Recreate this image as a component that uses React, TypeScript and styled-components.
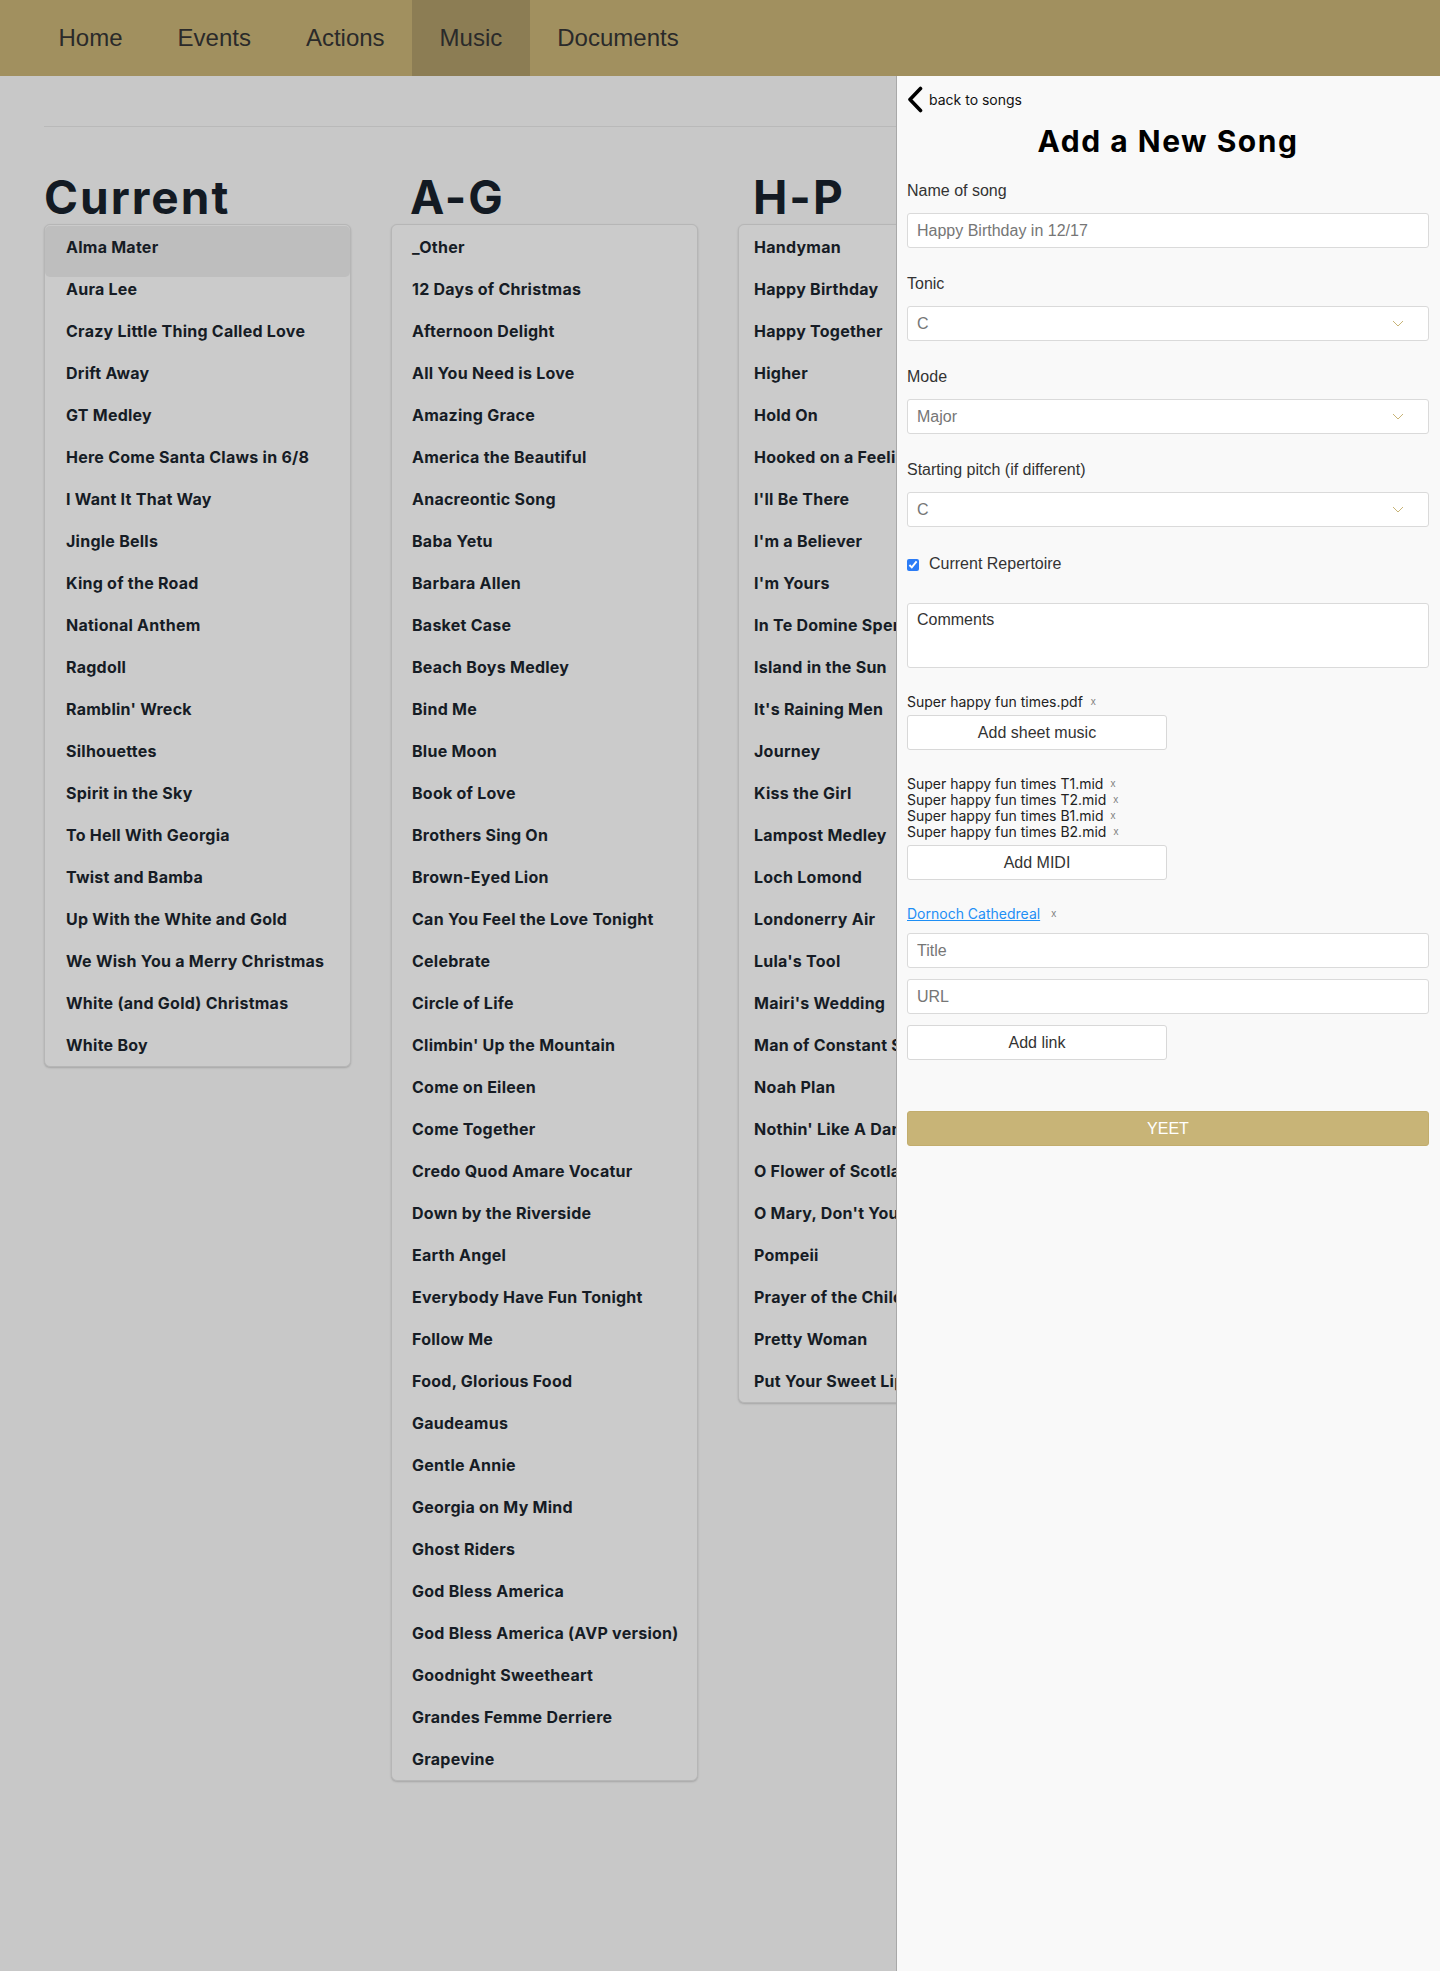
import React from "react";
import styled, { createGlobalStyle } from "styled-components";

const GlobalStyle = createGlobalStyle`
  html, body { margin: 0; padding: 0; }
  body {
    background: #c8c8c8;
    font-family: "Liberation Sans", Arial, sans-serif;
  }
  * { box-sizing: border-box; }
`;

const Root = styled.div`
  position: relative;
  min-height: 100vh;
  background: #c8c8c8;
`;

const NavBar = styled.nav`
  display: flex;
  align-items: stretch;
  height: 76px;
  padding-left: 31px;
  background: #a1905f;
`;

const NavItem = styled.a<{ $active?: boolean }>`
  display: flex;
  align-items: center;
  padding: 0 27.5px;
  font-family: "Liberation Sans", Arial, sans-serif;
  font-size: 24px;
  color: #2a2a2a;
  text-decoration: none;
  background: ${(p) => (p.$active ? "#8c7d54" : "transparent")};
`;

const Main = styled.main`
  padding: 50px 48px 60px 44px;
`;

const Rule = styled.hr`
  margin: 0;
  border: 0;
  height: 1px;
  background: #b9b9b9;
`;

const Columns = styled.div`
  display: grid;
  grid-template-columns: repeat(4, 307px);
  column-gap: 40px;
  align-items: start;
  margin-top: 47px;
`;

const Column = styled.section`
  display: flex;
  flex-direction: column;
`;

const Heading = styled.h2<{ $indent: number }>`
  margin: 0 0 4px;
  padding-left: ${(p) => p.$indent}px;
  font-family: Inter, "Noto Sans", sans-serif;
  font-weight: 700;
  font-size: 46px;
  line-height: 46px;
  letter-spacing: 2px;
  color: #131a23;
`;

const Card = styled.ul`
  list-style: none;
  margin: 0;
  padding: 1px 0 0;
  background: #cbcbcb;
  border: 1px solid #b6b6b6;
  border-radius: 6px;
  box-shadow: 0 1px 2px rgba(0, 0, 0, 0.18);
`;

const Item = styled.li<{ $indent: number; $selected?: boolean }>`
  height: ${(p) => (p.$selected ? 51 : 42)}px;
  margin-bottom: ${(p) => (p.$selected ? -9 : 0)}px;
  padding-left: ${(p) => p.$indent}px;
  font-family: Inter, "Noto Sans", sans-serif;
  font-weight: 700;
  font-size: 16px;
  line-height: 42px;
  letter-spacing: 0.25px;
  color: #161c25;
  white-space: nowrap;
  border-radius: 5px;
  background: ${(p) => (p.$selected ? "#bebebe" : "transparent")};
`;

const Panel = styled.aside`
  position: absolute;
  top: 76px;
  right: 0;
  bottom: 0;
  width: 544px;
  background: #f9f9f9;
  border-left: 1px solid #a9a9a9;
  padding: 10px 11px 0 10px;
  display: flex;
  flex-direction: column;
`;

const BackLink = styled.a`
  display: flex;
  align-items: center;
  gap: 6px;
  height: 27px;
  font-family: Inter, "Noto Sans", sans-serif;
  font-size: 14px;
  color: #111;
  text-decoration: none;
`;

const Title = styled.h1`
  margin: 10px 0 23px;
  text-align: center;
  font-family: Inter, "Noto Sans", sans-serif;
  font-weight: 700;
  font-size: 30px;
  line-height: 36px;
  letter-spacing: 1.5px;
  color: #000;
`;

const Field = styled.div`
  display: flex;
  flex-direction: column;
  margin-bottom: 27px;
`;

const Label = styled.label`
  font-size: 16px;
  line-height: 18px;
  color: #333;
  margin-bottom: 13px;
`;

const TextInput = styled.input<{ $gap?: number }>`
  height: 35px;
  width: 100%;
  margin: 0 0 ${(p) => p.$gap ?? 0}px;
  padding: 0 9px;
  border: 1px solid #dadada;
  border-radius: 3px;
  background: #fff;
  font-family: "Liberation Sans", Arial, sans-serif;
  font-size: 16px;
  color: #333;
  &::placeholder { color: #767676; }
`;

const SelectBox = styled.div`
  display: flex;
  align-items: center;
  justify-content: space-between;
  height: 35px;
  padding: 0 24px 0 9px;
  border: 1px solid #dadada;
  border-radius: 3px;
  background: #fff;
  font-size: 16px;
  color: #767676;
`;

const CheckRow = styled.label`
  display: flex;
  align-items: center;
  gap: 10px;
  height: 18px;
  margin: 1px 0 30px;
  font-size: 16px;
  color: #333;
  input {
    width: 12px;
    height: 12px;
    margin: 2px 0 0;
    accent-color: #2b7cf6;
  }
`;

const TextArea = styled.textarea`
  height: 65px;
  padding: 7px 9px;
  margin: 0 0 26px;
  resize: none;
  border: 1px solid #dadada;
  border-radius: 3px;
  background: #fff;
  font-family: "Liberation Sans", Arial, sans-serif;
  font-size: 16px;
  color: #333;
  &::placeholder { color: #333; }
`;

const FileList = styled.div`
  display: flex;
  flex-direction: column;
  margin-bottom: 5px;
`;

const FileRow = styled.div`
  display: flex;
  align-items: center;
  height: 16px;
  font-family: Inter, "Noto Sans", sans-serif;
  font-size: 14px;
  line-height: 16px;
  color: #222;
`;

const Remove = styled.span<{ $gap?: number }>`
  margin-left: ${(p) => p.$gap ?? 7}px;
  font-family: "Liberation Sans", Arial, sans-serif;
  font-size: 10px;
  line-height: 10px;
  color: #808080;
`;

const LinkText = styled.a`
  color: #1e8ff5;
  text-decoration: underline;
`;

const OutlineButton = styled.button<{ $gap?: number }>`
  width: 260px;
  height: 35px;
  margin: 0 0 ${(p) => p.$gap ?? 26}px;
  border: 1px solid #d8d8d8;
  border-radius: 3px;
  background: #fff;
  font-family: "Liberation Sans", Arial, sans-serif;
  font-size: 16px;
  color: #333;
`;

const LinkRow = styled.div`
  margin-bottom: 11px;
`;

const SubmitButton = styled.button`
  width: 100%;
  height: 35px;
  margin-top: 51px;
  border: 1px solid #c2ad6d;
  border-radius: 3px;
  background: #c8b477;
  font-family: "Liberation Sans", Arial, sans-serif;
  font-size: 16px;
  color: #fff;
`;

const Chevron = () => (
  <svg width="12" height="7" viewBox="0 0 12 7" aria-hidden>
    <polyline points="1,1 6,6 11,1" fill="none" stroke="#c8b477" strokeWidth="1" />
  </svg>
);

const BackChevron = () => (
  <svg width="16" height="27" viewBox="0 0 16 27" aria-hidden>
    <polyline
      points="13.5,2.5 3,13.5 13.5,24.5"
      fill="none"
      stroke="#000"
      strokeWidth="3.6"
      strokeLinecap="round"
      strokeLinejoin="round"
    />
  </svg>
);

const current = [
  "Alma Mater", "Aura Lee", "Crazy Little Thing Called Love", "Drift Away", "GT Medley",
  "Here Come Santa Claws in 6/8", "I Want It That Way", "Jingle Bells", "King of the Road",
  "National Anthem", "Ragdoll", "Ramblin' Wreck", "Silhouettes", "Spirit in the Sky",
  "To Hell With Georgia", "Twist and Bamba", "Up With the White and Gold",
  "We Wish You a Merry Christmas", "White (and Gold) Christmas", "White Boy",
];

const aToG = [
  "_Other", "12 Days of Christmas", "Afternoon Delight", "All You Need is Love", "Amazing Grace",
  "America the Beautiful", "Anacreontic Song", "Baba Yetu", "Barbara Allen", "Basket Case",
  "Beach Boys Medley", "Bind Me", "Blue Moon", "Book of Love", "Brothers Sing On",
  "Brown-Eyed Lion", "Can You Feel the Love Tonight", "Celebrate", "Circle of Life",
  "Climbin' Up the Mountain", "Come on Eileen", "Come Together", "Credo Quod Amare Vocatur",
  "Down by the Riverside", "Earth Angel", "Everybody Have Fun Tonight", "Follow Me",
  "Food, Glorious Food", "Gaudeamus", "Gentle Annie", "Georgia on My Mind", "Ghost Riders",
  "God Bless America", "God Bless America (AVP version)", "Goodnight Sweetheart",
  "Grandes Femme Derriere", "Grapevine",
];

const hToP = [
  "Handyman", "Happy Birthday", "Happy Together", "Higher", "Hold On", "Hooked on a Feeling",
  "I'll Be There", "I'm a Believer", "I'm Yours", "In Te Domine Speravi", "Island in the Sun",
  "It's Raining Men", "Journey", "Kiss the Girl", "Lampost Medley", "Loch Lomond",
  "Londonerry Air", "Lula's Tool", "Mairi's Wedding", "Man of Constant Sorrow", "Noah Plan",
  "Nothin' Like A Dame", "O Flower of Scotland", "O Mary, Don't You Weep", "Pompeii",
  "Prayer of the Children", "Pretty Woman", "Put Your Sweet Lips",
];

const qToZ = [
  "Ragdoll", "Ramblin' Wreck", "Shenandoah", "Silhouettes", "Spirit in the Sky", "Stand By Me",
  "Sweet Caroline", "The Longest Time", "To Hell With Georgia", "Twist and Bamba",
  "Up With the White and Gold", "We Wish You a Merry Christmas", "White (and Gold) Christmas",
  "White Boy",
];

const columns = [
  { title: "Current", songs: current, headIndent: 0, itemIndent: 21, selected: 0 },
  { title: "A-G", songs: aToG, headIndent: 19, itemIndent: 20, selected: -1 },
  { title: "H-P", songs: hToP, headIndent: 15, itemIndent: 15, selected: -1 },
  { title: "Q-Z", songs: qToZ, headIndent: 15, itemIndent: 15, selected: -1 },
];

const midis = [
  "Super happy fun times T1.mid",
  "Super happy fun times T2.mid",
  "Super happy fun times B1.mid",
  "Super happy fun times B2.mid",
];

export default function App() {
  return (
    <Root>
      <GlobalStyle />
      <NavBar>
        <NavItem href="#">Home</NavItem>
        <NavItem href="#">Events</NavItem>
        <NavItem href="#">Actions</NavItem>
        <NavItem href="#" $active>Music</NavItem>
        <NavItem href="#">Documents</NavItem>
      </NavBar>
      <Main>
        <Rule />
        <Columns>
          {columns.map((c) => (
            <Column key={c.title}>
              <Heading $indent={c.headIndent}>{c.title}</Heading>
              <Card>
                {c.songs.map((s, i) => (
                  <Item key={s + i} $indent={c.itemIndent} $selected={i === c.selected}>
                    {s}
                  </Item>
                ))}
              </Card>
            </Column>
          ))}
        </Columns>
      </Main>
      <Panel>
        <BackLink href="#">
          <BackChevron />
          back to songs
        </BackLink>
        <Title>Add a New Song</Title>
        <Field>
          <Label>Name of song</Label>
          <TextInput placeholder="Happy Birthday in 12/17" />
        </Field>
        <Field>
          <Label>Tonic</Label>
          <SelectBox>
            C
            <Chevron />
          </SelectBox>
        </Field>
        <Field>
          <Label>Mode</Label>
          <SelectBox>
            Major
            <Chevron />
          </SelectBox>
        </Field>
        <Field>
          <Label>Starting pitch (if different)</Label>
          <SelectBox>
            C
            <Chevron />
          </SelectBox>
        </Field>
        <CheckRow>
          <input type="checkbox" defaultChecked />
          Current Repertoire
        </CheckRow>
        <TextArea placeholder="Comments" />
        <FileList>
          <FileRow>
            Super happy fun times.pdf<Remove $gap={8}>x</Remove>
          </FileRow>
        </FileList>
        <OutlineButton>Add sheet music</OutlineButton>
        <FileList>
          {midis.map((m) => (
            <FileRow key={m}>
              {m}
              <Remove>x</Remove>
            </FileRow>
          ))}
        </FileList>
        <OutlineButton>Add MIDI</OutlineButton>
        <LinkRow>
          <FileRow>
            <LinkText href="#">Dornoch Cathedreal</LinkText>
            <Remove $gap={11}>x</Remove>
          </FileRow>
        </LinkRow>
        <TextInput placeholder="Title" $gap={11} />
        <TextInput placeholder="URL" $gap={11} />
        <OutlineButton $gap={0}>Add link</OutlineButton>
        <SubmitButton>YEET</SubmitButton>
      </Panel>
    </Root>
  );
}
